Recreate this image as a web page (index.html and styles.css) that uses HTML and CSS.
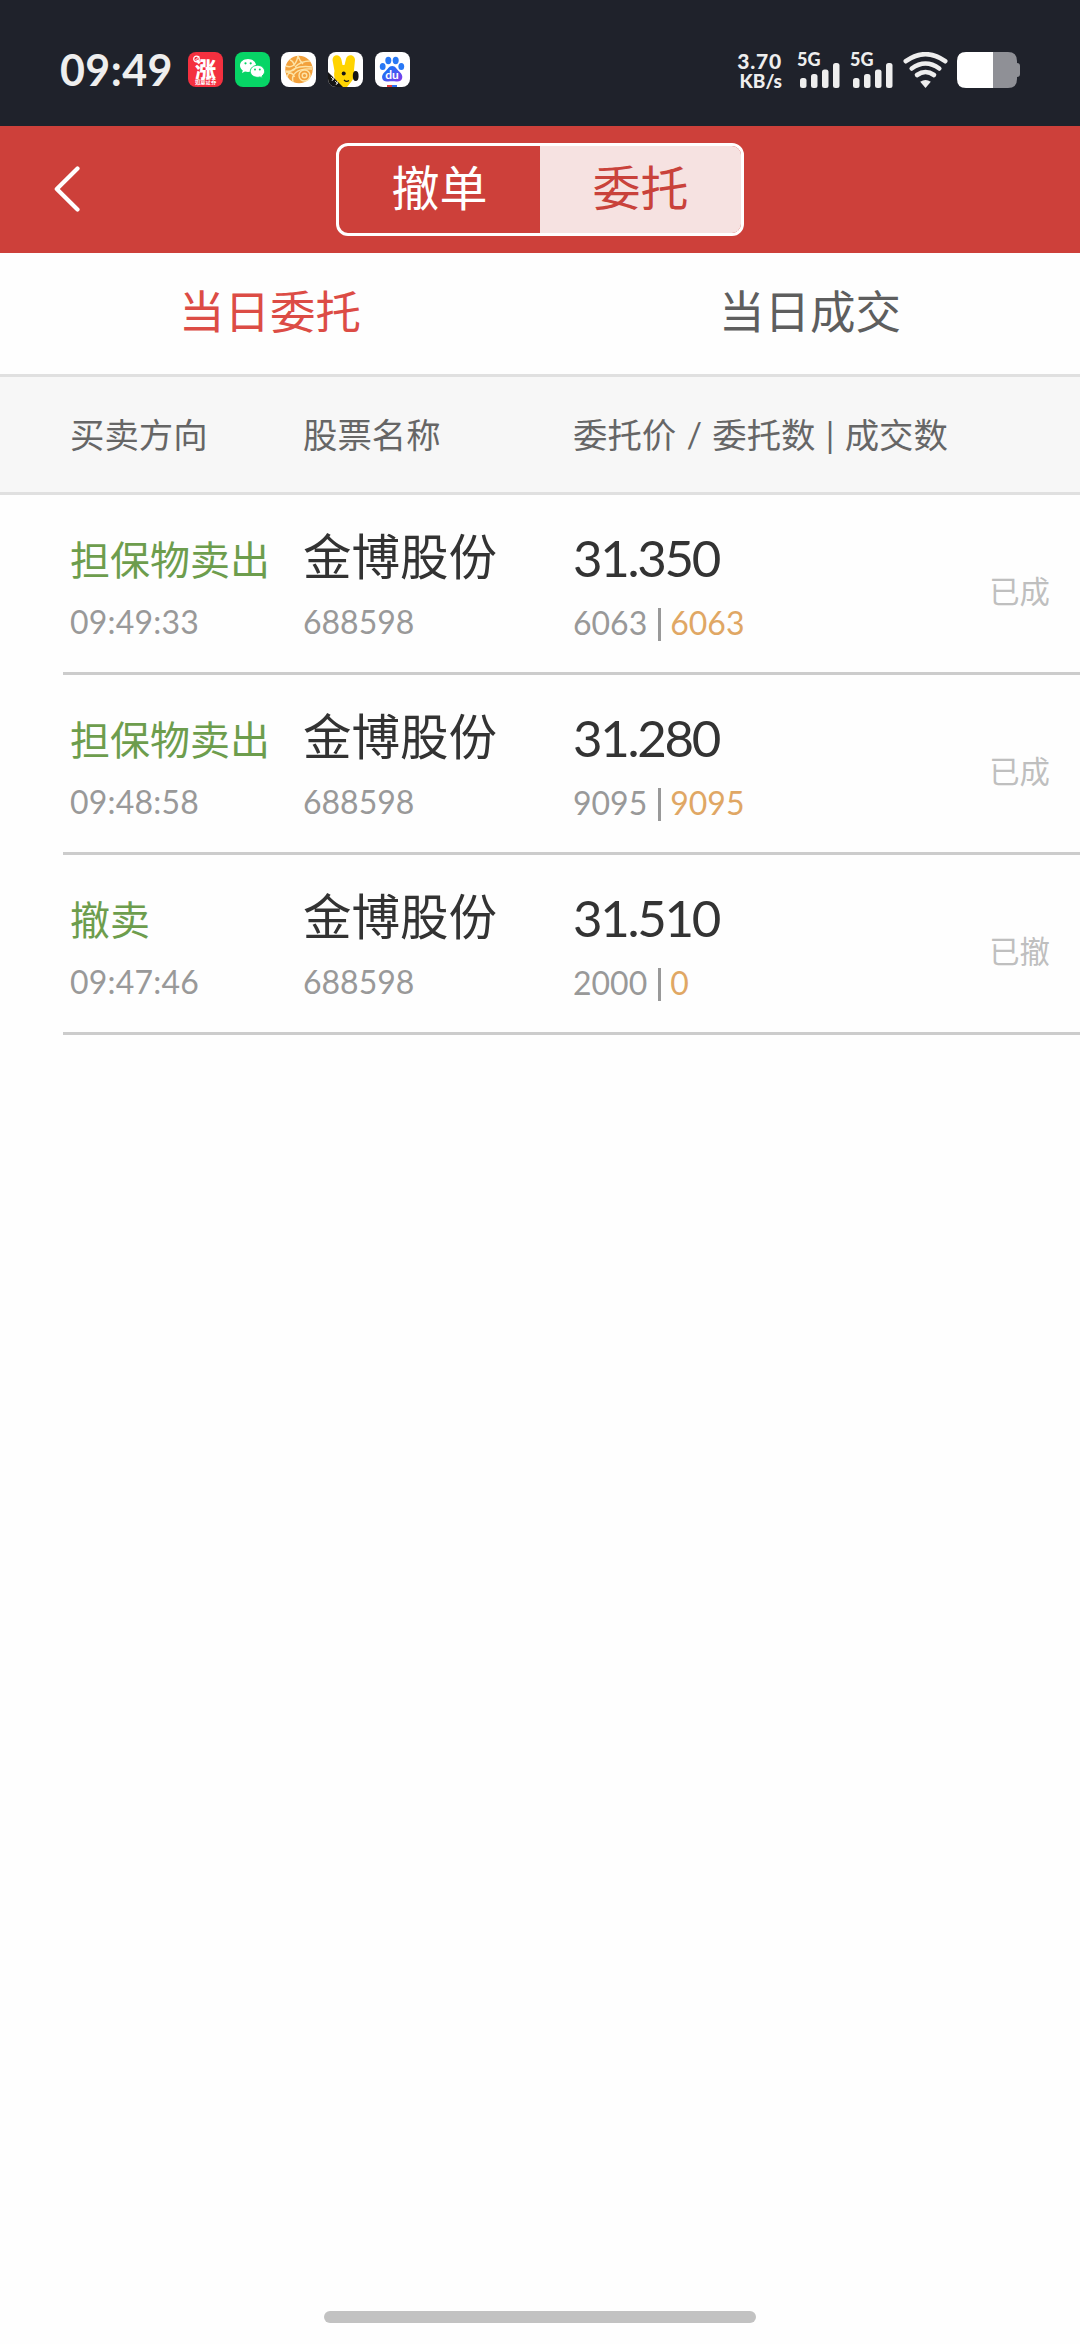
FILE: index.html
```html
<!DOCTYPE html>
<html lang="zh-CN">
<head>
<meta charset="utf-8">
<title>当日委托</title>
<link rel="stylesheet" href="styles.css">
</head>
<body>
<div class="screen">
  <header class="status">
    <div class="status-left">
      <span class="clock">09:49</span>
      <div class="apps">
        <svg class="app" viewBox="0 0 35 35"><rect width="35" height="35" rx="8" fill="#f4303f"/><text x="7" y="24.500" class="zhang">涨</text><circle cx="8.500" cy="7" r="2.800" fill="none" stroke="#fff" stroke-width="1.200"/><path d="M7 8.500l4-4" stroke="#fff"/><text x="7" y="31.500" class="zhang-sub">如意证券</text></svg>
        <svg class="app" viewBox="0 0 35 35"><rect width="35" height="35" rx="8" fill="#07d566"/><path d="M13 7c-4.600 0-8 2.900-8 6.500 0 2 1.100 3.800 2.800 5L7 21l3-1.500c1 .3 2 .4 3 .4 4.500 0 8-2.800 8-6.400S17.500 7 13 7z" fill="#fff"/><path d="M22.500 13.300c-4 0-7.200 2.700-7.200 6s3.200 6 7.200 6c.9 0 1.700-.1 2.500-.4l2.600 1.400-.7-2.200c1.700-1.100 2.700-2.900 2.700-4.800 0-3.300-3.200-6-7.100-6z" fill="#fff" stroke="#07d566" stroke-width=".9"/><g fill="#07d566"><circle cx="10.500" cy="11.300" r="1.100"/><circle cx="15.700" cy="11.300" r="1.100"/><circle cx="20" cy="17.500" r="1"/><circle cx="24.800" cy="17.500" r="1"/></g></svg>
        <svg class="app" viewBox="0 0 35 35"><rect width="35" height="35" rx="8" fill="#fff"/><circle cx="18" cy="17.500" r="13.700" fill="#f2a13c"/><g fill="none" stroke="#fde3a5" stroke-width="1.400"><path d="M5 14c5 2 10 0 12-10M4.500 19c5 1 9-1 11-4M14 15c4-4 9-6 15-6M17 4c1 3 2 5 5 8M9 8c3 1 4 4 4 6M6 25c2-7 10-12 25-10M12 30c-2-7 3-14 19-13M4.500 20c5 0 8 2 9 5"/><circle cx="23.500" cy="23.500" r="5.500"/><circle cx="23.500" cy="23.500" r="2.300"/></g></svg>
        <svg class="app" viewBox="0 0 35 35"><rect width="35" height="35" rx="8" fill="#fff"/><path d="M4.500 8c0-6.500 8-6.500 9 0l1 5h2l1.500-6c1-5.500 9-5 9 1l-1 10c2 6-1 10-7 17h-6C8 31 5 25 6.500 19z" fill="#ffd400"/><path d="M0 20l15 15H8a8 8 0 0 1-8-8z" fill="#151515"/><path d="M3 25l3 3M7 29l3 3M6 25l-2 4M10 29l-2 4" stroke="#ddd" stroke-width=".9"/><circle cx="15.700" cy="21.500" r="2" fill="#151515"/><ellipse cx="27.700" cy="24" rx="2.900" ry="5" fill="#151515"/><path d="M16 28q2.500 2.500 5 .5" fill="none" stroke="#151515" stroke-width="1.200"/></svg>
        <svg class="app" viewBox="0 0 35 35"><defs><linearGradient id="paw" x1="0" y1="0" x2="1" y2="1"><stop offset=".3" stop-color="#236df5"/><stop offset="1" stop-color="#8a35e8"/></linearGradient></defs><rect width="35" height="35" rx="8" fill="#fff"/><g fill="#2878f5"><ellipse cx="7.700" cy="14.500" rx="2.900" ry="3.600"/><ellipse cx="13.300" cy="8.500" rx="3" ry="3.700"/><ellipse cx="20.700" cy="8.500" rx="3" ry="3.700"/><ellipse cx="26.300" cy="14.500" rx="2.900" ry="3.600"/></g><path d="M17.200 14c3.500 0 4.600 3.500 7 5.500 6 5 2.500 11-3 10-2.700-.5-5.300-.5-8 0-5.500 1-9-5-3-10 2.400-2 3.500-5.500 7-5.500z" fill="url(#paw)"/><text x="10.300" y="27" class="du">du</text><path d="M12 33h5v2h-5z" fill="#e33b3b"/><path d="M17 33h5v2h-5z" fill="#2b6df2"/></svg>
      </div>
    </div>
    <div class="status-right">
      <div class="speed"><span class="rate">3.70</span><span class="unit">KB/s</span></div>
      <div class="signal"><span>5G</span><svg viewBox="0 0 43 36"><g fill="#eee"><rect x="3" y="26" width="6.500" height="10" rx="2.500"/><rect x="14" y="22" width="6.500" height="14" rx="2.500"/><rect x="25" y="17.500" width="6.500" height="18.500" rx="2.500"/><rect x="36" y="11" width="6.500" height="25" rx="2.500"/></g></svg></div>
      <div class="signal"><span>5G</span><svg viewBox="0 0 43 36"><g fill="#eee"><rect x="3" y="26" width="6.500" height="10" rx="2.500"/><rect x="14" y="22" width="6.500" height="14" rx="2.500"/><rect x="25" y="17.500" width="6.500" height="18.500" rx="2.500"/><rect x="36" y="11" width="6.500" height="25" rx="2.500"/></g></svg></div>
      <svg class="wifi" viewBox="0 0 45 36"><g fill="none" stroke="#eee" stroke-width="4.600" stroke-linecap="round"><path d="M2.800 9.200Q22.500-4.800 42.200 9.200"/><path d="M8.700 16.500Q22.500 6.500 36.300 16.500"/><path d="M14 23Q22.500 17 31 23"/></g><path d="M17.200 29.700Q22.500 26.200 27.800 29.700L22.500 36z" fill="#eee"/></svg>
      <svg class="battery" viewBox="0 0 63 36"><path d="M36 0h15q9 0 9 9v2q3 0 3 3v8q0 3-3 3v2q0 9-9 9H36z" fill="#8f9096"/><path d="M36 0v36H9q-9 0-9-9V9q0-9 9-9z" fill="#fff"/></svg>
    </div>
  </header>

  <nav class="titlebar">
    <svg class="back" viewBox="0 0 26 46"><path d="M23.500 2.500L2.800 23l20.700 20.500" fill="none" stroke="#fff" stroke-width="4.200" stroke-linecap="round" stroke-linejoin="round"/></svg>
    <div class="segment"><span class="seg">撤单</span><span class="seg seg-on">委托</span></div>
  </nav>

  <div class="tabs"><span class="tab tab-on">当日委托</span><span class="tab">当日成交</span></div>

  <div class="head"><span>买卖方向</span><span>股票名称</span><span>委托价 / 委托数 | 成交数</span></div>

  <main class="list">
    <section class="row">
      <div class="cell"><span class="side">担保物卖出</span><span class="sub time">09:49:33</span></div>
      <div class="cell"><span class="name">金博股份</span><span class="sub">688598</span></div>
      <div class="cell"><span class="price">31.350</span><span class="sub qty">6063<i class="bar"></i><b>6063</b></span></div>
      <span class="state">已成</span>
    </section>
    <section class="row">
      <div class="cell"><span class="side">担保物卖出</span><span class="sub time">09:48:58</span></div>
      <div class="cell"><span class="name">金博股份</span><span class="sub">688598</span></div>
      <div class="cell"><span class="price">31.280</span><span class="sub qty">9095<i class="bar"></i><b>9095</b></span></div>
      <span class="state">已成</span>
    </section>
    <section class="row">
      <div class="cell"><span class="side">撤卖</span><span class="sub time">09:47:46</span></div>
      <div class="cell"><span class="name">金博股份</span><span class="sub">688598</span></div>
      <div class="cell"><span class="price">31.510</span><span class="sub qty">2000<i class="bar"></i><b>0</b></span></div>
      <span class="state">已撤</span>
    </section>
  </main>
  <div class="home"></div>
</div>
</body>
</html>
```
FILE: styles.css
```css
* { box-sizing: border-box; }
body { margin: 0; background: #fff; font-family: Lato, "Noto Sans CJK SC", sans-serif; }
.screen { width: 1080px; height: 2344px; display: flex; flex-direction: column; background: #fefefe; }
svg { display: block; }

.status { height: 126px; padding: 52px 60px 0 60px; display: flex; justify-content: space-between; background: #1f222b; color: #eee; }
.status-left, .status-right, .apps { display: flex; }
.clock { width: 128px; font-size: 43px; line-height: 35px; font-weight: 700; letter-spacing: .4px; }
.apps { gap: 11.700px; }
.app { width: 35px; height: 35px; }
.zhang { font: 900 21px "Noto Sans CJK SC", sans-serif; fill: #fff; }
.zhang-sub { font: 700 5.300px "Noto Sans CJK SC", sans-serif; fill: #fff; }
.du { font: 700 12px Lato, sans-serif; fill: #fff; }
.speed { width: 47px; margin-right: 15px; display: flex; flex-direction: column; align-items: flex-end; font-weight: 900; font-size: 21px; line-height: 17px; }
.rate { letter-spacing: .8px; }
.unit { margin-top: 3px; font-size: 19px; }
.signal { width: 43px; height: 36px; margin-right: 10px; display: grid; }
.signal span, .signal svg { grid-area: 1 / 1; }
.signal span { font-weight: 900; font-size: 18px; line-height: 14px; }
.signal svg { width: 43px; height: 36px; }
.wifi { width: 45px; height: 36px; margin-right: 9px; }
.battery { width: 63px; height: 36px; }

.titlebar { height: 127px; display: grid; grid-template-columns: 336px 408px 336px; align-items: center; background: #cd403a; }
.back { width: 26px; height: 46px; margin: 0 0 2px 54px; }
.segment { height: 93px; display: flex; border: 3px solid #fff; border-radius: 12px; overflow: hidden; }
.seg { flex: 1; font-size: 48px; line-height: 84px; text-align: center; color: #fff; }
.seg-on { background: #f6e2e1; color: #c9423b; }

.tabs { height: 124px; display: flex; border-bottom: 3px solid #e0e0e0; }
.tab { flex: 1; text-align: center; font-size: 45.500px; line-height: 118px; color: #5e5e5e; }
.tab-on { color: #dc4c45; }

.head { height: 118px; padding-left: 70px; display: grid; grid-template-columns: 233px 270px 1fr; font-size: 34.400px; line-height: 115px; word-spacing: 1.500px; color: #666; background: #f7f7f7; border-bottom: 3px solid #e0e0e0; }

.list { flex: 1; }
.row { height: 180px; margin-left: 63px; padding: 37px 30px 0 7px; display: grid; grid-template-columns: 233px 270px 1fr auto; border-bottom: 3px solid #ccc; }
.cell { display: flex; flex-direction: column; }
.side, .name, .price { height: 54px; white-space: nowrap; }
.side { font-size: 40px; line-height: 56px; color: #6d9d4d; }
.name { font-size: 48.500px; line-height: 49px; color: #333; }
.price { font-size: 51px; line-height: 51px; color: #333; letter-spacing: -2.300px; }
.sub { height: 72px; line-height: 71px; font-size: 32px; color: #999; }
.time { letter-spacing: .2px; }
.qty { display: flex; align-items: center; }
.qty b { font-weight: 400; color: #e0a764; }
.bar { width: 3px; height: 33px; margin: 4px 9px 0 11px; background: #999; }
.state { font-size: 30.400px; line-height: 119px; color: #bfbfbf; }

.home { width: 432px; height: 12px; margin: 0 auto 21px; border-radius: 6px; background: #c2c2c2; }
```
